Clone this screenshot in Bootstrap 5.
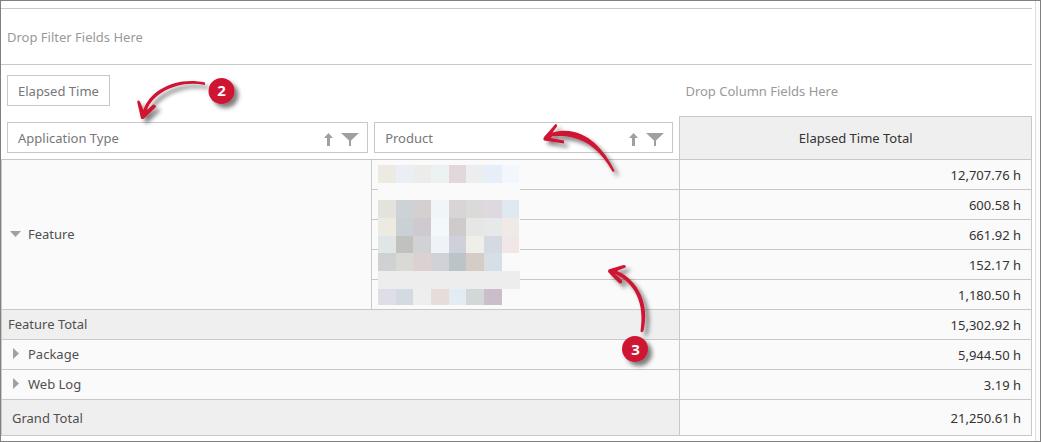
<!DOCTYPE html>
<html lang="en">
<head>
<meta charset="utf-8">
<meta name="viewport" content="width=device-width, initial-scale=1">
<title>Elapsed Time</title>
<link href="https://cdn.jsdelivr.net/npm/bootstrap@5.3.0/dist/css/bootstrap.min.css" rel="stylesheet">
<style>
  body { font-family: "Noto Sans", "Open Sans", sans-serif; font-size: 13px; line-height: 20px; color: #333; background: #fff; }
  .frame { border: 1px solid #808080; padding-right: 4px; background: #fdfdfd; }
  .pane { border-right: 1px solid #ddd; padding: 7px 3px 5px 0; background: #fff; }
  .filter-zone { border-top: 1px solid #c8c8c8; border-bottom: 1px solid #c8c8c8; padding: 18px 6px 17px; }
  .hint { color: #999; }
  .pivot { table-layout: fixed; border-collapse: separate; border-spacing: 0; }
  .pivot .c-type { width: 35.9%; }
  .pivot .c-product { width: 29.9%; }
  .pivot th { font-weight: 400; }
  .drop-row > * { height: 51px; padding: 10px 6px 0; vertical-align: top; }
  .drop-row .hint { padding-top: 16px; }
  .field-row > * { height: 44px; border-bottom: 1px solid #c8c8c8; }
  .field-row .field-cell { padding: 6px 3px 0 6px; vertical-align: top; }
  .field-row .field-cell + .field-cell { padding: 6px 6px 0 3px; }
  .field-row .total-head { border: 1px solid #c8c8c8; background: #efefef; text-align: center; }
  .field { height: 31px; border: 1px solid #c8c8c8; border-radius: 0; background: #fff; color: #777; padding: 0 10px; font-size: 13px; line-height: 20px; }
  .field.has-tools { padding-right: 8px; }
  .glyph { border: 0; background: none; padding: 0; color: #a0a0a0; line-height: 0; }
  .field .glyph { padding-top: 3px; }
  .pivot tbody > tr > * { height: 30px; padding: 0 10px 0 6px; border-left: 1px solid #c8c8c8; border-bottom: 1px solid #c8c8c8; background: #fafafa; }
  .pivot tbody > tr > th { color: #505050; padding-bottom: 2px; }
  .pivot tbody > tr > .num { border-right: 1px solid #c8c8c8; text-align: right; }
  .pivot tbody > tr > .sum { background: #efefef; }
  .pivot tbody > .grand > * { height: 36px; }
  .pivot tbody > .grand > th { padding-left: 10px; padding-bottom: 0; }
  .toggle { width: 20px; padding-left: 2px; }
  .mask { top: 5px; left: 6px; background: #fafafa; z-index: 1; }
  .notes { top: 0; left: 0; z-index: 2; pointer-events: none; }
</style>
</head>
<body>
<main class="frame position-relative">
  <div class="pane">
    <div class="filter-zone hint">Drop Filter Fields Here</div>
    <table class="pivot w-100">
      <colgroup><col class="c-type"><col class="c-product"><col></colgroup>
      <thead>
        <tr class="drop-row">
          <td colspan="2"><button type="button" class="field">Elapsed Time</button></td>
          <td class="hint">Drop Column Fields Here</td>
        </tr>
        <tr class="field-row">
          <th class="field-cell" scope="col">
            <div class="field has-tools d-flex align-items-center">
              <span class="me-auto">Application Type</span>
              <button type="button" class="glyph me-2" aria-label="Sort by application type"><svg width="9" height="13" viewBox="0 0 9 13"><path fill="currentColor" d="M4.500 0 9 5H6v8H3V5H0z"/></svg></button>
              <button type="button" class="glyph" aria-label="Filter application type"><svg width="18" height="13" viewBox="0 0 18 13"><path fill="currentColor" d="M0 0h18l-8 7.500v5.500H8V7.500z"/></svg></button>
            </div>
          </th>
          <th class="field-cell" scope="col">
            <div class="field has-tools d-flex align-items-center">
              <span class="me-auto">Product</span>
              <button type="button" class="glyph me-2" aria-label="Sort by product"><svg width="9" height="13" viewBox="0 0 9 13"><path fill="currentColor" d="M4.500 0 9 5H6v8H3V5H0z"/></svg></button>
              <button type="button" class="glyph" aria-label="Filter product"><svg width="18" height="13" viewBox="0 0 18 13"><path fill="currentColor" d="M0 0h18l-8 7.500v5.500H8V7.500z"/></svg></button>
            </div>
          </th>
          <th class="total-head" scope="col">Elapsed Time Total</th>
        </tr>
      </thead>
      <tbody>
        <tr>
          <th rowspan="5" scope="rowgroup"><div class="d-flex align-items-center"><button type="button" class="glyph toggle text-start" aria-label="Collapse Feature"><svg width="11" height="6" viewBox="0 0 11 6"><path fill="currentColor" d="M0 0h11L5.500 6z"/></svg></button>Feature</div></th>
          <td class="position-relative"><svg class="mask position-absolute" id="mask" width="142" height="140" shape-rendering="crispEdges" aria-hidden="true"></svg></td>
          <td class="num">12,707.76 h</td>
        </tr>
        <tr><td></td><td class="num">600.58 h</td></tr>
        <tr><td></td><td class="num">661.92 h</td></tr>
        <tr><td></td><td class="num">152.17 h</td></tr>
        <tr><td></td><td class="num">1,180.50 h</td></tr>
        <tr><th colspan="2" class="sum" scope="row">Feature Total</th><td class="num">15,302.92 h</td></tr>
        <tr><th colspan="2" scope="row"><div class="d-flex align-items-center"><button type="button" class="glyph toggle text-start" aria-label="Expand Package"><svg width="9" height="11" viewBox="-3 0 9 11"><path fill="currentColor" d="M0 0v11l6-5.500z"/></svg></button>Package</div></th><td class="num">5,944.50 h</td></tr>
        <tr><th colspan="2" scope="row"><div class="d-flex align-items-center"><button type="button" class="glyph toggle text-start" aria-label="Expand Web Log"><svg width="9" height="11" viewBox="-3 0 9 11"><path fill="currentColor" d="M0 0v11l6-5.500z"/></svg></button>Web Log</div></th><td class="num">3.19 h</td></tr>
        <tr class="grand"><th colspan="2" class="sum" scope="row">Grand Total</th><td class="num">21,250.61 h</td></tr>
      </tbody>
    </table>
  </div>
  <!-- numbered call-outs drawn over the grid -->
  <svg class="notes position-absolute" width="700" height="400" viewBox="1 1 700 400" role="img" aria-label="Call-outs 2 and 3">
    <defs><filter id="drop" x="-30%" y="-30%" width="170%" height="170%"><feDropShadow dx="4" dy="4" stdDeviation="2" flood-color="#000" flood-opacity=".5"/></filter></defs>
    <g fill="#ce1432" filter="url(#drop)">
      <path d="M205 82.500C176 76 149 91 143.500 110L140 101.500Q138 99.500 137.200 102L141 118.500Q143 120 145 117.500L156 107Q156 104 153 104.500L147 110C152 94 178 79 205 85z"/>
      <circle cx="221.500" cy="91" r="13"/>
    </g>
    <g fill="#ce1432" filter="url(#drop)">
      <path d="M612.500 171.500C601 151 583 133 552 136.500L551 138L564 140.500V143.500L544 140.500Q542.500 139 544 137L555.500 124Q557.500 124 557 126.500L552.500 132.500C582 124 603 147 614.500 170.500Q614.500 172.500 612.500 171.500z"/>
    </g>
    <g fill="#ce1432" filter="url(#drop)">
      <path d="M640.500 331.500C645 303 635 283 614.500 273.500L622 280.500Q623 284 619.500 283.500L608.500 272.500Q607 270 610 269L623.500 265Q627 265.500 625.500 267.500L617 271C638 280 650 304 643.500 331Q642 333 640.500 331.500z"/>
      <circle cx="635" cy="349" r="13"/>
    </g>
    <g fill="#fff" font-family="Noto Sans, sans-serif" font-weight="700" font-size="15" text-anchor="middle">
      <text x="221.500" y="96">2</text><text x="635.500" y="355">3</text>
    </g>
  </svg>
</main>
<script src="https://cdn.jsdelivr.net/npm/bootstrap@5.3.0/dist/js/bootstrap.bundle.min.js"></script>
<script>
  // Pixelated cover for the product names: [top, height, colours from left to right]
  const edges = [0, 18, 35, 53, 71, 88, 106, 124, 141];
  const bands = [
    [0, 18, 'edeae4 ebeff5 eeecea ecf1f2 e2d7db ecedef e6eff7 f2f7fb'],
    [35, 18, 'e3e3de ccd2d5 d5d0d0 eff5f8 d9d4d5 dadbd9 ded9df dfe9f0'],
    [53, 18, 'edeae2 cad1d5 cfcad0 f3f8fa cfcbca e5e6e5 e6e9e7 f0eae7'],
    [71, 17, 'e0e5e6 c1c1be d1d2d3 eef3f7 d0d0da eeefe9 d5dae2 f0e7e6'],
    [88, 18, 'd0d1d3 d9dad5 dad1d0 d1d1da bbc4c8 d5ccc6 d7dfe6'],
    [124, 16, 'dedee7 d3dae2 eeeeef e6ddd8 e3ebf3 d2d7d8 cabeca']
  ];
  let cells = '<rect y="106" width="142" height="18" fill="#ededed"/>';
  for (const [y, h, row] of bands)
    row.split(' ').forEach((c, i) => cells += `<rect x="${edges[i]}" y="${y}" width="${edges[i + 1] - edges[i]}" height="${h}" fill="#${c}"/>`);
  document.getElementById('mask').innerHTML = cells;
</script>
</body>
</html>
